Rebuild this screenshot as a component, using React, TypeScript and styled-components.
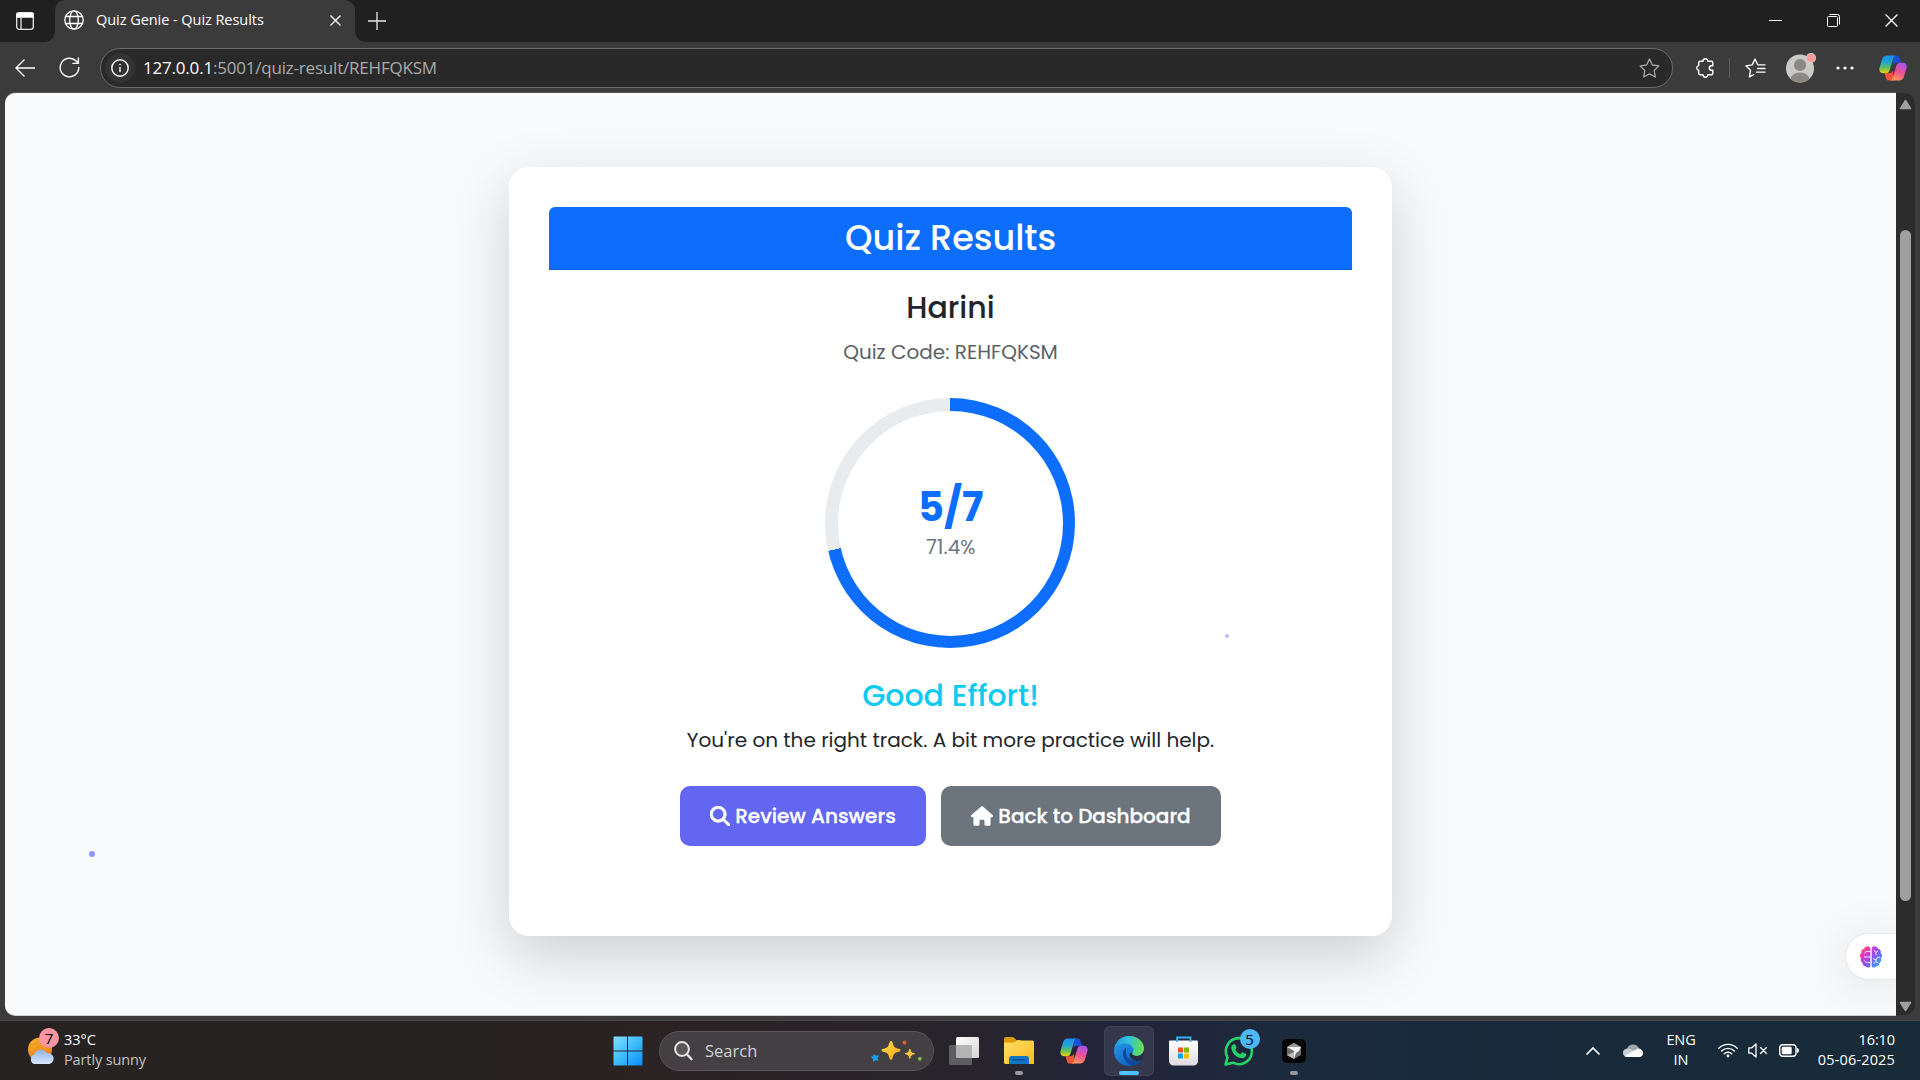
import React from "react";
import styled, { createGlobalStyle } from "styled-components";
import { FaHouse, FaMagnifyingGlass } from "react-icons/fa6";

const UI = `"Segoe UI", "Open Sans", "Noto Sans", sans-serif`;
const POP = `Poppins, Inter, "Open Sans", sans-serif`;

const GlobalStyle = createGlobalStyle`
  *, *::before, *::after { box-sizing: border-box; }
  html, body { margin: 0; padding: 0; background: #3b3b3b; overflow: hidden; }
  svg { display: block; flex: none; }
`;

const Desktop = styled.div`
  width: 1920px;
  height: 1080px;
  display: flex;
  flex-direction: column;
  overflow: hidden;
  background: #3b3b3b;
  color: #fff;
  font-family: ${UI};
`;

/* ---------- Tab strip ---------- */
const TabStrip = styled.header`
  height: 42px;
  flex: none;
  display: flex;
  background: #202020;
`;
const Slot = styled.div<{ $w: number }>`
  width: ${(p) => p.$w}px;
  flex: none;
  display: flex;
  align-items: center;
  justify-content: center;
`;
const Tab = styled.div`
  position: relative;
  width: 300px;
  height: 42px;
  margin-left: 5px;
  padding: 0 14px 2px 9px;
  display: flex;
  align-items: center;
  background: #3b3b3b;
  border-radius: 10px 10px 0 0;
  &::before, &::after {
    content: "";
    position: absolute;
    bottom: 0;
    width: 10px;
    height: 10px;
  }
  &::before { left: -10px; background: radial-gradient(circle at 0 0, #202020 9.5px, #3b3b3b 10px); }
  &::after { right: -10px; background: radial-gradient(circle at 100% 0, #202020 9.5px, #3b3b3b 10px); }
`;
const TabTitle = styled.span`
  flex: 1;
  margin-left: 12px;
  font-size: 14.5px;
  line-height: 20px;
  letter-spacing: -0.05px;
  white-space: nowrap;
`;
const WindowButtons = styled.div`
  margin-left: auto;
  display: flex;
  padding-bottom: 1px;
`;

/* ---------- Toolbar ---------- */
const Toolbar = styled.div`
  height: 51px;
  flex: none;
  display: flex;
  align-items: center;
  padding-right: 4px;
`;
const AddressBar = styled.div`
  width: 1573px;
  height: 40px;
  margin: 0 6px 0 11px;
  padding: 0 12px 0 4px;
  display: flex;
  align-items: center;
  border: 1px solid #6b6b6b;
  border-radius: 20px;
  background: #292929;
`;
const InfoChip = styled.span`
  width: 30px;
  height: 30px;
  display: grid;
  place-items: center;
  border-radius: 50%;
  background: #333;
`;
const Url = styled.span`
  flex: 1;
  margin-left: 8px;
  font-size: 17px;
  line-height: 24px;
  letter-spacing: -0.2px;
  color: #ababab;
  white-space: nowrap;
`;
const Host = styled.b`
  font-weight: 400;
  color: #fff;
`;
const Divider = styled.i`
  width: 1px;
  height: 20px;
  background: #5c5c5c;
`;

/* ---------- Page ---------- */
const Viewport = styled.div`
  height: 927px;
  flex: none;
  display: flex;
  padding: 0 5px 5px;
`;
const Page = styled.main`
  position: relative;
  width: 1891px;
  height: 922px;
  padding-top: 74px;
  display: flex;
  justify-content: center;
  align-items: flex-start;
  background: #f9fafc;
  border-radius: 10px 0 0 10px;
  box-shadow: 0 1px 0 #d0d0d0, 0 -1px 0 #575757;
  overflow: hidden;
`;
const Card = styled.section`
  width: 883px;
  height: 769px;
  padding: 40px;
  display: flex;
  flex-direction: column;
  align-items: center;
  background: #fff;
  border-radius: 20px;
  box-shadow: 0 20px 60px rgba(0, 0, 0, 0.175);
  font-family: ${POP};
  color: #212529;
`;
const CardHeader = styled.div`
  width: 803px;
  height: 63px;
  display: flex;
  align-items: center;
  justify-content: center;
  background: #0d6efd;
  border-bottom: 1px solid #0b5ed9;
  border-radius: 6px 6px 0 0;
  color: #fff;
`;
const Title = styled.h3`
  margin: 0;
  font-size: 35px;
  line-height: 42px;
  font-weight: 500;
  white-space: nowrap;
`;
const Heading = styled.h4<{ $top: number; $color?: string }>`
  margin: ${(p) => p.$top}px 0 11px;
  font-size: 30px;
  line-height: 36px;
  font-weight: 500;
  white-space: nowrap;
  color: ${(p) => p.$color ?? "#212529"};
`;
const Line = styled.p<{ $color?: string }>`
  margin: 0 0 31px;
  font-size: 20px;
  line-height: 30px;
  white-space: nowrap;
  color: ${(p) => p.$color ?? "#212529"};
`;
const Ring = styled.div`
  width: 250px;
  height: 250px;
  margin-right: 1px;
  flex: none;
  display: grid;
  place-items: center;
  border-radius: 50%;
  background: conic-gradient(#0d6efd 0 71.4%, #e9ecef 71.4% 100%);
`;
const RingHole = styled.div`
  width: 225px;
  height: 225px;
  padding-left: 1.5px;
  display: flex;
  flex-direction: column;
  align-items: center;
  justify-content: center;
  border-radius: 50%;
  background: #fff;
`;
const Score = styled.div`
  font-size: 40px;
  line-height: 48px;
  font-weight: 700;
  color: #0d6efd;
`;
const Percent = styled.div`
  font-size: 20px;
  line-height: 33px;
  color: #6c757d;
`;
const Actions = styled.div`
  display: flex;
  gap: 15px;
`;
const Button = styled.button<{ $w: number; $bg: string }>`
  width: ${(p) => p.$w}px;
  height: 60px;
  padding: 0;
  display: flex;
  align-items: center;
  justify-content: center;
  gap: 5px;
  border: 0;
  border-radius: 10px;
  background: ${(p) => p.$bg};
  color: #fff;
  font: 500 20px/30px ${POP};
  -webkit-text-stroke: 0.3px #fff;
  white-space: nowrap;
`;
const Particle = styled.i<{ $x: number; $y: number; $d: number; $c: string }>`
  position: absolute;
  left: ${(p) => p.$x}px;
  top: ${(p) => p.$y}px;
  width: ${(p) => p.$d}px;
  height: ${(p) => p.$d}px;
  border-radius: 50%;
  background: ${(p) => p.$c};
`;
const Assistant = styled.div`
  position: absolute;
  right: 0;
  bottom: 36px;
  width: 50px;
  height: 45px;
  padding-left: 13px;
  display: flex;
  align-items: center;
  background: #fff;
  border-radius: 23px 0 0 23px;
  box-shadow: 0 6px 50px rgba(0, 0, 0, 0.12), 0 0 2px rgba(0, 0, 0, 0.12);
`;
const ScrollTrack = styled.div`
  width: 19px;
  height: 922px;
  padding: 6px 0 3px;
  display: flex;
  flex-direction: column;
  align-items: center;
  background: #2c2c2c;
  border-radius: 0 10px 10px 0;
`;
const ScrollThumb = styled.div`
  width: 11px;
  height: 671px;
  margin: 120px 0 auto;
  border-radius: 6px;
  background: #9f9f9f;
`;

/* ---------- Taskbar ---------- */
const Taskbar = styled.footer`
  height: 60px;
  flex: none;
  display: flex;
  align-items: center;
  border-top: 1px solid #45474a;
  background: linear-gradient(90deg, #272322 0%, #272322 25%, #2a2223 34%, #28242b 50%, #22243a 58%, #1c2a3e 68%, #182a3b 80%, #172b38 100%);
`;
const Weather = styled.div`
  width: 612.5px;
  padding-left: 27px;
  display: flex;
  align-items: center;
  gap: 9px;
`;
const Stack = styled.div<{ $align?: string; $w?: number }>`
  width: ${(p) => (p.$w ? p.$w + "px" : "auto")};
  padding-bottom: 1px;
  display: flex;
  flex-direction: column;
  align-items: ${(p) => p.$align ?? "flex-start"};
`;
const Small = styled.span<{ $dim?: boolean; $ls?: number }>`
  font-size: 14.5px;
  line-height: 20px;
  white-space: nowrap;
  color: ${(p) => (p.$dim ? "#c4c4c4" : "#fff")};
  letter-spacing: ${(p) => p.$ls ?? 0}px;
`;
const SearchBox = styled.div`
  width: 275px;
  height: 40px;
  margin-left: 16.5px;
  padding: 0 11px 0 14px;
  display: flex;
  align-items: center;
  border: 1px solid #58545a;
  border-radius: 20px;
  background: #433f43;
`;
const SearchText = styled.span`
  flex: 1;
  margin-left: 12px;
  font-size: 16.5px;
  line-height: 24px;
  color: #d4d2d4;
`;
const Apps = styled.div`
  display: flex;
  margin-left: 2px;
`;
const AppTile = styled.div<{ $active?: boolean }>`
  position: relative;
  width: 50px;
  height: 50px;
  margin: 0 2.5px;
  display: grid;
  place-items: center;
  border-radius: 6px;
  background: ${(p) => (p.$active ? "rgba(255,255,255,.09)" : "transparent")};
  box-shadow: ${(p) => (p.$active ? "inset 0 0 0 1px rgba(255,255,255,.06)" : "none")};
`;
const Indicator = styled.i<{ $active?: boolean }>`
  position: absolute;
  bottom: 1px;
  left: 50%;
  width: ${(p) => (p.$active ? 20 : 8)}px;
  height: 4px;
  transform: translateX(-50%);
  border-radius: 2px;
  background: ${(p) => (p.$active ? "#4cc2ff" : "#9a9a9e")};
`;
const Badge = styled.span<{ $x: number; $y: number; $bg: string }>`
  position: absolute;
  left: ${(p) => p.$x}px;
  top: ${(p) => p.$y}px;
  width: 20px;
  height: 20px;
  border-radius: 50%;
  background: ${(p) => p.$bg};
  color: #000;
  font-size: 15px;
  line-height: 20px;
  text-align: center;
`;
const WeatherIcon = styled.div`
  position: relative;
  width: 28px;
  height: 28px;
`;
const Tray = styled.div`
  margin-left: auto;
  padding-right: 25px;
  display: flex;
  align-items: center;
`;

/* ---------- Drawings ---------- */
const Copilot = ({ size, id }: { size: number; id: string }) => (
  <svg width={size} height={(size * 26) / 28} viewBox="0 0 28 26">
    <defs>
      <linearGradient id={id + "a"} x1="0" y1="0" x2="0" y2="1">
        <stop offset="0" stopColor="#1b8ff0" /><stop offset=".4" stopColor="#22a5cf" /><stop offset=".7" stopColor="#66c255" /><stop offset="1" stopColor="#f4d210" />
      </linearGradient>
      <linearGradient id={id + "b"} x1=".7" y1="0" x2=".3" y2="1">
        <stop offset="0" stopColor="#a855f0" /><stop offset=".5" stopColor="#ee4f93" /><stop offset="1" stopColor="#ff9a60" />
      </linearGradient>
    </defs>
    <path d="M14 .5h3.500c1.800 0 2.600 1 3.100 2.600l1.400 4.600h-4.500c-2.500 0-3.200 1.200-4 3z" fill="#1b4fd8" />
    <path d="M14.500 25.500H10c-1.800 0-2.600-1-3.100-2.600L5.500 18.300H10c2.500 0 3.200-1.200 4-3z" fill="#f0563a" />
    <path d="M8 .5h9c-1.500 0-2.300 1-2.900 3l-3.300 11.200c-.7 2.400-1.700 3.600-4 3.600H4.500C1 18.300-.2 16 .6 12.500L3 4.500C3.800 1.900 5.500.5 8 .5z" fill={`url(#${id}a)`} />
    <path d="M20 25.500h-9c1.500 0 2.300-1 2.900-3l3.300-11.200c.7-2.400 1.700-3.600 4-3.600h2.300c3.500 0 4.700 2.300 3.900 5.800l-2.400 8c-.8 2.600-2.500 4-5 4z" fill={`url(#${id}b)`} />
  </svg>
);

const TabActionsIcon = () => (
  <svg width="18" height="18" viewBox="0 0 18 18" fill="none" stroke="#e6e6e6" strokeWidth="1.3">
    <rect x=".7" y=".7" width="16.600" height="16.600" rx="2.500" />
    <path d="M1 1.500h16v3.500H1z" fill="#fff" stroke="#fff" />
    <path d="M5 5v12" />
  </svg>
);
const Globe = () => (
  <svg width="20" height="20" viewBox="0 0 20 20" fill="none" stroke="#fff" strokeWidth="1.3">
    <circle cx="10" cy="10" r="9.200" />
    <ellipse cx="10" cy="10" rx="4.300" ry="9.200" />
    <path d="M1.500 6.500h17M1.500 13.500h17" />
  </svg>
);
const Cross = ({ s, w = 1.4 }: { s: number; w?: number }) => (
  <svg width={s} height={s} viewBox="0 0 12 12" stroke="#fff" strokeWidth={w}>
    <path d="M.5.5l11 11M11.500.5l-11 11" />
  </svg>
);
const PlusIcon = () => (
  <svg width="18" height="18" viewBox="0 0 18 18" stroke="#e8e8e8" strokeWidth="1.300"><path d="M9 0v18M0 9h18" /></svg>
);
const Back = () => (
  <svg width="20" height="18" viewBox="0 0 20 18" fill="none" stroke="#fff" strokeWidth="1.400"><path d="M20 9H1M9.500.6L1 9l8.500 8.400" /></svg>
);
const Reload = () => (
  <svg width="21" height="21" viewBox="0 0 21 21" fill="none" stroke="#fff" strokeWidth="1.400" strokeLinecap="round" strokeLinejoin="round">
    <path d="M19.800 10.500a9.300 9.300 0 1 1-2.600-6.400l2 2.100M19.400 1v5.400h-5.400" />
  </svg>
);
const Info = () => (
  <svg width="18" height="18" viewBox="0 0 18 18" fill="none" stroke="#fff" strokeWidth="1.400">
    <circle cx="9" cy="9" r="8.200" /><path d="M9 8v5" /><circle cx="9" cy="5.600" r=".5" fill="#fff" strokeWidth=".8" />
  </svg>
);
const Star = () => (
  <svg width="21" height="20" viewBox="0 0 21 20" fill="none" stroke="#a8a8a8" strokeWidth="1.300" strokeLinejoin="round">
    <path d="M10.500 1l2.900 6 6.500.9-4.700 4.600 1.100 6.500-5.800-3.100L4.700 19l1.100-6.500L1.100 7.900 7.600 7z" />
  </svg>
);
const Puzzle = () => (
  <svg width="19" height="20" viewBox="0 0 19 20" fill="none" stroke="#fff" strokeWidth="1.400" strokeLinejoin="round">
    <path d="M8 3.200a2.400 2.400 0 0 1 4.800 0h3.500c.9 0 1.500.6 1.500 1.500v3.100h-1.300a2.200 2.200 0 0 0 0 4.400h1.300v3.100c0 .9-.6 1.500-1.500 1.500h-3.500a2.400 2.400 0 0 1-4.800 0H5.200c-.9 0-1.500-.6-1.500-1.500v-3a2.400 2.400 0 0 1 0-4.700V4.700c0-.9.6-1.500 1.500-1.500z" />
  </svg>
);
const Favourites = () => (
  <svg width="21" height="20" viewBox="0 0 21 20" fill="none" stroke="#fff" strokeWidth="1.300" strokeLinejoin="round" strokeLinecap="round">
    <path d="M12.700 6.800L10 1 7.200 6.900.9 7.800l4.600 4.500-1.100 6.600 4.300-2.300M12.700 6.800H20M12.500 10.500H20M11.500 14.200H20" />
  </svg>
);
const Avatar = () => (
  <svg width="32" height="30" viewBox="0 0 32 30">
    <defs><clipPath id="av"><circle cx="15" cy="15.500" r="14" /></clipPath></defs>
    <circle cx="15" cy="15.500" r="14" fill="#cbc9c6" />
    <g clipPath="url(#av)" fill="#8c8886"><circle cx="15" cy="12" r="6" /><ellipse cx="15" cy="26" rx="9.500" ry="6.500" /></g>
    <circle cx="26" cy="5" r="5" fill="#d8cfcd" /><circle cx="26" cy="5" r="4" fill="#f99a96" />
  </svg>
);
const Dots = () => (
  <svg width="18" height="4" viewBox="0 0 18 4" fill="#fff"><circle cx="2" cy="2" r="1.600" /><circle cx="9" cy="2" r="1.600" /><circle cx="16" cy="2" r="1.600" /></svg>
);
const Arrow = ({ down }: { down?: boolean }) => (
  <svg width="13" height="11" viewBox="0 0 13 11">
    <path d={down ? "M6.500 9.500L11.500 1.500h-10z" : "M6.500 1.500L11.500 9.500h-10z"} fill="#9f9f9f" stroke="#9f9f9f" strokeWidth="1.500" strokeLinejoin="round" />
  </svg>
);
const Brain = () => (
  <svg width="24" height="24" viewBox="0 0 24 24">
    <defs>
      <linearGradient id="br" x1="0" y1="0" x2="1" y2=".8">
        <stop offset="0" stopColor="#ff9a20" /><stop offset=".28" stopColor="#e838b8" /><stop offset=".6" stopColor="#8a50f5" /><stop offset="1" stopColor="#25b0ff" />
      </linearGradient>
    </defs>
    <path d="M11.300 3v18.500c-.6 1.300-3.500 1.600-4.700-.3-2 .1-3.200-1.500-2.900-3C1.800 17 1.300 14.500 2 13 .3 11.500.6 9 2.300 8 1.800 5.500 3 4 4.800 3.700 5.800 1 9.800.3 11.300 3zM12.700 3v18.500c.6 1.300 3.500 1.600 4.700-.3 2 .1 3.200-1.500 2.900-3 1.900-1.200 2.400-3.700 1.700-5.200 1.700-1.500 1.400-4-.3-5 .5-2.500-.7-4-2.500-4.300C18.200 1 14.200.3 12.700 3z" fill="url(#br)" />
    <path d="M5.500 8.500C6 7 7 6.500 8.500 6.500h2.800M5 12h6.300M5.500 15.500c.5 1.500 1.500 2 3 2h2.800M15 5l2 2.500L19 6M17 7.500V10M14 13.500l3 1.500 1.500-2.500L21 12M17 15v1.500l-2.500 2M17 16.500l2 1.500" fill="none" stroke="#fff" strokeWidth=".9" />
  </svg>
);
const Cloudy = () => (
  <svg width="28" height="28" viewBox="0 0 28 28">
    <defs>
      <linearGradient id="sun" x1="0" y1="0" x2=".4" y2="1"><stop offset="0" stopColor="#f5b52a" /><stop offset="1" stopColor="#f07c1a" /></linearGradient>
      <linearGradient id="cld" x1="0" y1="0" x2="0" y2="1"><stop offset="0" stopColor="#8fb2ec" /><stop offset="1" stopColor="#dbe8fb" /></linearGradient>
    </defs>
    <circle cx="13" cy="12.500" r="12" fill="url(#sun)" />
    <path d="M7.500 27a5 5 0 0 1-.4-9.500 7 7 0 0 1 12.800-1.200A5.500 5.500 0 0 1 22.500 27z" fill="url(#cld)" />
  </svg>
);
const Windows = () => (
  <svg width="30" height="30" viewBox="0 0 30 30">
    <defs><linearGradient id="win" x1="0" y1="0" x2="1" y2="1"><stop offset="0" stopColor="#84e0ff" /><stop offset=".5" stopColor="#3dbcfb" /><stop offset="1" stopColor="#0a8cf5" /></linearGradient></defs>
    <path d="M1.500.5h12.500v14H.5V1.500a1 1 0 0 1 1-1zM15 .5h13.500a1 1 0 0 1 1 1v13H15zM.5 15.500H14v14H1.500a1 1 0 0 1-1-1zM15 15.500h14.500v13a1 1 0 0 1-1 1H15z" fill="url(#win)" />
  </svg>
);
const Lens = () => (
  <svg width="19" height="20" viewBox="0 0 19 20" fill="none" stroke="#e4e4e4" strokeWidth="2" strokeLinecap="round">
    <circle cx="8" cy="8" r="6.900" fill="#5a5759" /><path d="M13.200 13.500l4.300 4.700" strokeWidth="2.400" />
  </svg>
);
const Sparkles = () => (
  <svg width="51" height="22" viewBox="0 0 51 22">
    <defs><linearGradient id="spk" x1="0" y1="0" x2="1" y2="1"><stop offset="0" stopColor="#ffe04a" /><stop offset="1" stopColor="#f2a012" /></linearGradient></defs>
    <path d="M20 1c.8 0 1.200.5 1.600 1.700 1.200 4.300 1.800 4.900 6.100 6.100 1.300.4 1.800.9 1.800 1.500s-.5 1.100-1.800 1.500c-4.300 1.200-4.900 1.800-6.100 6.100-.4 1.200-.8 1.800-1.600 1.800s-1.200-.6-1.600-1.800c-1.200-4.300-1.800-4.900-6.100-6.100-1.300-.4-1.800-.9-1.800-1.500s.5-1.100 1.800-1.500c4.300-1.200 4.900-1.800 6.100-6.100C18.800 1.500 19.200 1 20 1z" fill="url(#spk)" />
    <path d="M38.800 9c.8 3.400 1.300 3.900 4.700 4.700-3.400.8-3.900 1.300-4.700 4.700-.8-3.400-1.300-3.900-4.700-4.700 3.400-.8 3.900-1.300 4.700-4.700z" fill="#ffc93c" stroke="#ffc93c" />
    <path d="M3 14.500l1.700 1.700 2.600-.4-1.300 2.200.8 2.300-2.200-.5-2 1.500-.2-2.500L.5 17l2.300-.3z" fill="#18a4f0" stroke="#18a4f0" strokeLinejoin="round" />
    <circle cx="33.500" cy="2.500" r="1.900" fill="#e8602c" /><circle cx="48.800" cy="18.800" r="1.900" fill="#8cc63e" />
  </svg>
);
const TaskView = () => (
  <svg width="30" height="28" viewBox="0 0 30 28">
    <defs><linearGradient id="tv" x1="0" y1="0" x2="1" y2="1"><stop offset="0" stopColor="#fff" /><stop offset="1" stopColor="#d5d5d5" /></linearGradient></defs>
    <rect x="7" y="0" width="23" height="21" rx="1.500" fill="url(#tv)" />
    <rect x="0" y="8" width="23" height="20" rx="1.500" fill="#5e5e60" />
    <path d="M7 8h16v13H8.500A1.500 1.500 0 0 1 7 19.500z" fill="#b4b4b4" />
  </svg>
);
const Folder = () => (
  <svg width="30" height="27" viewBox="0 0 30 27">
    <defs><linearGradient id="fo" x1="0" y1="0" x2="1" y2="1"><stop offset="0" stopColor="#ffdf6a" /><stop offset="1" stopColor="#fbb91d" /></linearGradient></defs>
    <path d="M0 1.500A1.500 1.500 0 0 1 1.500 0H9l3.500 3H17v5H0z" fill="#dd9a08" />
    <path d="M0 5.500h10l3-2h15.500A1.500 1.500 0 0 1 30 5V27H1.500A1.500 1.500 0 0 1 0 25.500z" fill="url(#fo)" />
    <path d="M5 27v-5.500A2.500 2.500 0 0 1 7.500 19h15a2.500 2.500 0 0 1 2.500 2.500V27z" fill="#1273c9" />
    <path d="M9 22.700h12" stroke="#0b4f94" strokeWidth="1.400" strokeLinecap="round" />
  </svg>
);
const Edge = () => (
  <svg width="30" height="30" viewBox="0 0 30 30">
    <defs>
      <linearGradient id="e1" x1="0" y1=".3" x2="1" y2=".4"><stop offset="0" stopColor="#2593e0" /><stop offset=".45" stopColor="#2fc0dd" /><stop offset="1" stopColor="#6be04a" /></linearGradient>
      <linearGradient id="e2" x1="0" y1="0" x2=".6" y2="1"><stop offset="0" stopColor="#2a9ff0" /><stop offset="1" stopColor="#0b63be" /></linearGradient>
    </defs>
    <circle cx="15" cy="15" r="15" fill="url(#e2)" />
    <path d="M.3 12.500C1.500 5 7.800 0 15 0c9 0 15 6 15 12.500 0 4.500-3.300 7.500-7.300 7.500-3.200 0-4.700-1.200-4.700-2.200 0-.8 1.400-1.300 1.400-4 0-3.200-3.200-6.300-8.200-6.300C6.500 7.500 2.500 9.500.3 12.500z" fill="url(#e1)" />
    <path d="M12 11.500c-2.500 1.800-3.200 4.500-3 7 .5 6 5 10.500 10.500 11C24 28.500 27 26 28.500 23.300c-6 3.500-15.500 1.500-16.500-5.500-.3-2.500.5-4.500 0-6.300z" fill="#10489c" />
    <path d="M18.200 17c-.6 1 .3 3 4.500 3 3.500 0 6.300-2.200 7.200-5.500.5 4.500-.7 7.500-1.700 9-6.500 3.500-12 .2-12.700-4-.4-2 .8-3.500 2.700-2.500z" fill="#252d46" />
  </svg>
);
const Store = () => (
  <svg width="29" height="30" viewBox="0 0 29 30">
    <defs><linearGradient id="st" x1="0" y1="0" x2="0" y2="1"><stop offset="0" stopColor="#fff" /><stop offset="1" stopColor="#dcdcdc" /></linearGradient></defs>
    <path d="M1 4.500h27a1 1 0 0 1 1 1V25a4.500 4.500 0 0 1-4.500 4.500h-20A4.500 4.500 0 0 1 0 25V5.500a1 1 0 0 1 1-1z" fill="url(#st)" />
    <path d="M8 6V1.500h13.500V6" fill="none" stroke="#35b4f2" strokeWidth="1.800" />
    <path d="M9 11.500h5v5H9z" fill="#f25022" /><path d="M15 11.500h5v5h-5z" fill="#7fba00" /><path d="M9 17.500h5v5H9z" fill="#00a4ef" /><path d="M15 17.500h5v5h-5z" fill="#ffb900" />
  </svg>
);
const WhatsApp = () => (
  <svg width="30" height="30" viewBox="0 0 30 30">
    <path d="M1.500 28.500l2-7A13 13 0 1 1 8.800 26.700z" fill="none" stroke="#25d366" strokeWidth="2.600" strokeLinejoin="round" />
    <path d="M9.500 8.200c.7-.4 1.300-.3 1.700.5l1.200 2.400c.2.500.1.900-.2 1.300l-1 1.300c1.200 2.200 2.900 3.600 5.200 4.600l1.400-1.500c.3-.4.800-.5 1.200-.3l2.700 1.300c.5.300.6.700.5 1.300-.5 2.300-2.200 3.300-4.300 3.100C12.700 21.700 8 17.300 7.300 12c-.2-1.700.8-3 2.200-3.800z" fill="#25d366" />
  </svg>
);
const Cursor = () => (
  <svg width="24" height="24" viewBox="0 0 24 24">
    <rect width="24" height="24" rx="5" fill="#050505" />
    <path d="M5 8l7-4 7 4v8l-7 4-7-4z" fill="#6e6e6e" />
    <path d="M5 8l7-4 7 4z" fill="#9a9a9a" />
    <path d="M5 8h14l-2 4-3 2-2 6v-8z" fill="#f2f2f2" />
    <path d="M5 16l7-3v7z" fill="#bcbcbc" />
  </svg>
);
const Chevron = () => (
  <svg width="14" height="8" viewBox="0 0 14 8" fill="none" stroke="#fff" strokeWidth="1.700" strokeLinecap="round"><path d="M1 7l6-6 6 6" /></svg>
);
const OneDrive = () => (
  <svg width="20" height="13" viewBox="0 0 20 13">
    <path d="M4.500 13a4.300 4.300 0 0 1-.4-8.600A6.500 6.500 0 0 1 16 4.600 4.300 4.300 0 0 1 15.700 13z" fill="#9fa6ab" />
    <path d="M4 13a4 4 0 0 1-2.500-7c3-2.500 6-1 8 0l8.500 4.500c.5 1-1 2.500-2.300 2.500z" fill="#cdd1d4" />
    <path d="M2 12L14 5c3-1 6 1.500 6 4.200 0 2-1.600 3.800-4 3.800H4.500C3.500 13 2.500 12.600 2 12z" fill="#fff" />
  </svg>
);
const Wifi = () => (
  <svg width="20" height="15" viewBox="0 0 20 15" fill="none" stroke="#fff" strokeWidth="1.400" strokeLinecap="round">
    <path d="M.8 5.200a13 13 0 0 1 18.400 0M3.600 8a9 9 0 0 1 12.800 0M6.300 10.700a5.300 5.300 0 0 1 7.400 0" /><circle cx="10" cy="13" r="1.400" fill="#fff" stroke="none" />
  </svg>
);
const Muted = () => (
  <svg width="20" height="15" viewBox="0 0 20 15" fill="none" stroke="#fff" strokeWidth="1.300" strokeLinejoin="round" strokeLinecap="round">
    <path d="M.8 4.800h3L8 1v13l-4.200-3.800h-3zM12.500 4.500l6 6M18.500 4.500l-6 6" />
  </svg>
);
const Battery = () => (
  <svg width="20" height="13" viewBox="0 0 20 13">
    <rect x=".7" y=".7" width="16.300" height="11.600" rx="3" fill="none" stroke="#fff" strokeWidth="1.400" />
    <rect x="2.700" y="2.700" width="10" height="7.600" rx="1.200" fill="#fff" /><path d="M18 4c1.300.3 2 1.300 2 2.500S19.300 8.700 18 9z" fill="#fff" />
  </svg>
);

export default function App() {
  return (
    <Desktop>
      <GlobalStyle />
      <TabStrip>
        <Slot $w={50}><TabActionsIcon /></Slot>
        <Tab>
          <Globe />
          <TabTitle>Quiz Genie - Quiz Results</TabTitle>
          <Cross s={11} />
        </Tab>
        <Slot $w={44}><PlusIcon /></Slot>
        <WindowButtons>
          <Slot $w={58}><svg width="13" height="13" viewBox="0 0 13 13" stroke="#fff"><path d="M0 6.500h13" /></svg></Slot>
          <Slot $w={58}>
            <svg width="13" height="13" viewBox="0 0 13 13" fill="none" stroke="#fff"><rect x=".5" y="2.500" width="10" height="10" rx="1" /><path d="M2.500.5h8a2 2 0 0 1 2 2v8" /></svg>
          </Slot>
          <Slot $w={58}><Cross s={13} w={1.2} /></Slot>
        </WindowButtons>
      </TabStrip>

      <Toolbar>
        <Slot $w={49}><Back /></Slot>
        <Slot $w={40}><Reload /></Slot>
        <AddressBar>
          <InfoChip><Info /></InfoChip>
          <Url><Host>127.0.0.1</Host>:5001/quiz-result/REHFQKSM</Url>
          <Star />
        </AddressBar>
        <Slot $w={50}><Puzzle /></Slot>
        <Divider />
        <Slot $w={50}><Favourites /></Slot>
        <Slot $w={41}><Avatar /></Slot>
        <Slot $w={48}><Dots /></Slot>
        <Slot $w={47}><Copilot size={28} id="cpt" /></Slot>
      </Toolbar>

      <Viewport>
        <Page>
          <Card>
            <CardHeader><Title>Quiz Results</Title></CardHeader>
            <Heading $top={20}>Harini</Heading>
            <Line $color="#5c6166">Quiz Code: REHFQKSM</Line>
            <Ring>
              <RingHole>
                <Score>5/7</Score>
                <Percent>71.4%</Percent>
              </RingHole>
            </Ring>
            <Heading $top={30} $color="#0dcaf0">Good Effort!</Heading>
            <Line>You're on the right track. A bit more practice will help.</Line>
            <Actions>
              <Button $w={246} $bg="#6366f1"><FaMagnifyingGlass size={20} stroke="currentColor" strokeWidth={16} />Review Answers</Button>
              <Button $w={280} $bg="#6c757d"><FaHouse size={22} />Back to Dashboard</Button>
            </Actions>
          </Card>
          <Particle $x={84} $y={758} $d={6} $c="#8e97fb" />
          <Particle $x={1220} $y={541} $d={4} $c="#c9b6fa" />
          <Assistant><Brain /></Assistant>
        </Page>
        <ScrollTrack>
          <Arrow />
          <ScrollThumb />
          <Arrow down />
        </ScrollTrack>
      </Viewport>

      <Taskbar>
        <Weather>
          <WeatherIcon>
            <Cloudy />
            <Badge $x={12} $y={-9} $bg="#fb959f">7</Badge>
          </WeatherIcon>
          <Stack>
            <Small>33°C</Small>
            <Small $dim $ls={-0.12}>Partly sunny</Small>
          </Stack>
        </Weather>
        <Windows />
        <SearchBox>
          <Lens />
          <SearchText>Search</SearchText>
          <Sparkles />
        </SearchBox>
        <Apps>
          <AppTile><TaskView /></AppTile>
          <AppTile><Folder /><Indicator /></AppTile>
          <AppTile><Copilot size={28} id="cpb" /></AppTile>
          <AppTile $active><Edge /><Indicator $active /></AppTile>
          <AppTile><Store /></AppTile>
          <AppTile><WhatsApp /><Badge $x={26} $y={3} $bg="#4cb8f8">5</Badge></AppTile>
          <AppTile><Cursor /><Indicator /></AppTile>
        </Apps>
        <Tray>
          <Slot $w={40}><Chevron /></Slot>
          <Slot $w={40}><OneDrive /></Slot>
          <Stack $align="center" $w={56}><Small $ls={-0.1}>ENG</Small><Small>IN</Small></Stack>
          <Slot $w={38}><Wifi /></Slot>
          <Slot $w={22}><Muted /></Slot>
          <Slot $w={39}><Battery /></Slot>
          <Stack $align="flex-end" $w={87}><Small $ls={-0.1}>16:10</Small><Small $ls={0.15}>05-06-2025</Small></Stack>
        </Tray>
      </Taskbar>
    </Desktop>
  );
}
